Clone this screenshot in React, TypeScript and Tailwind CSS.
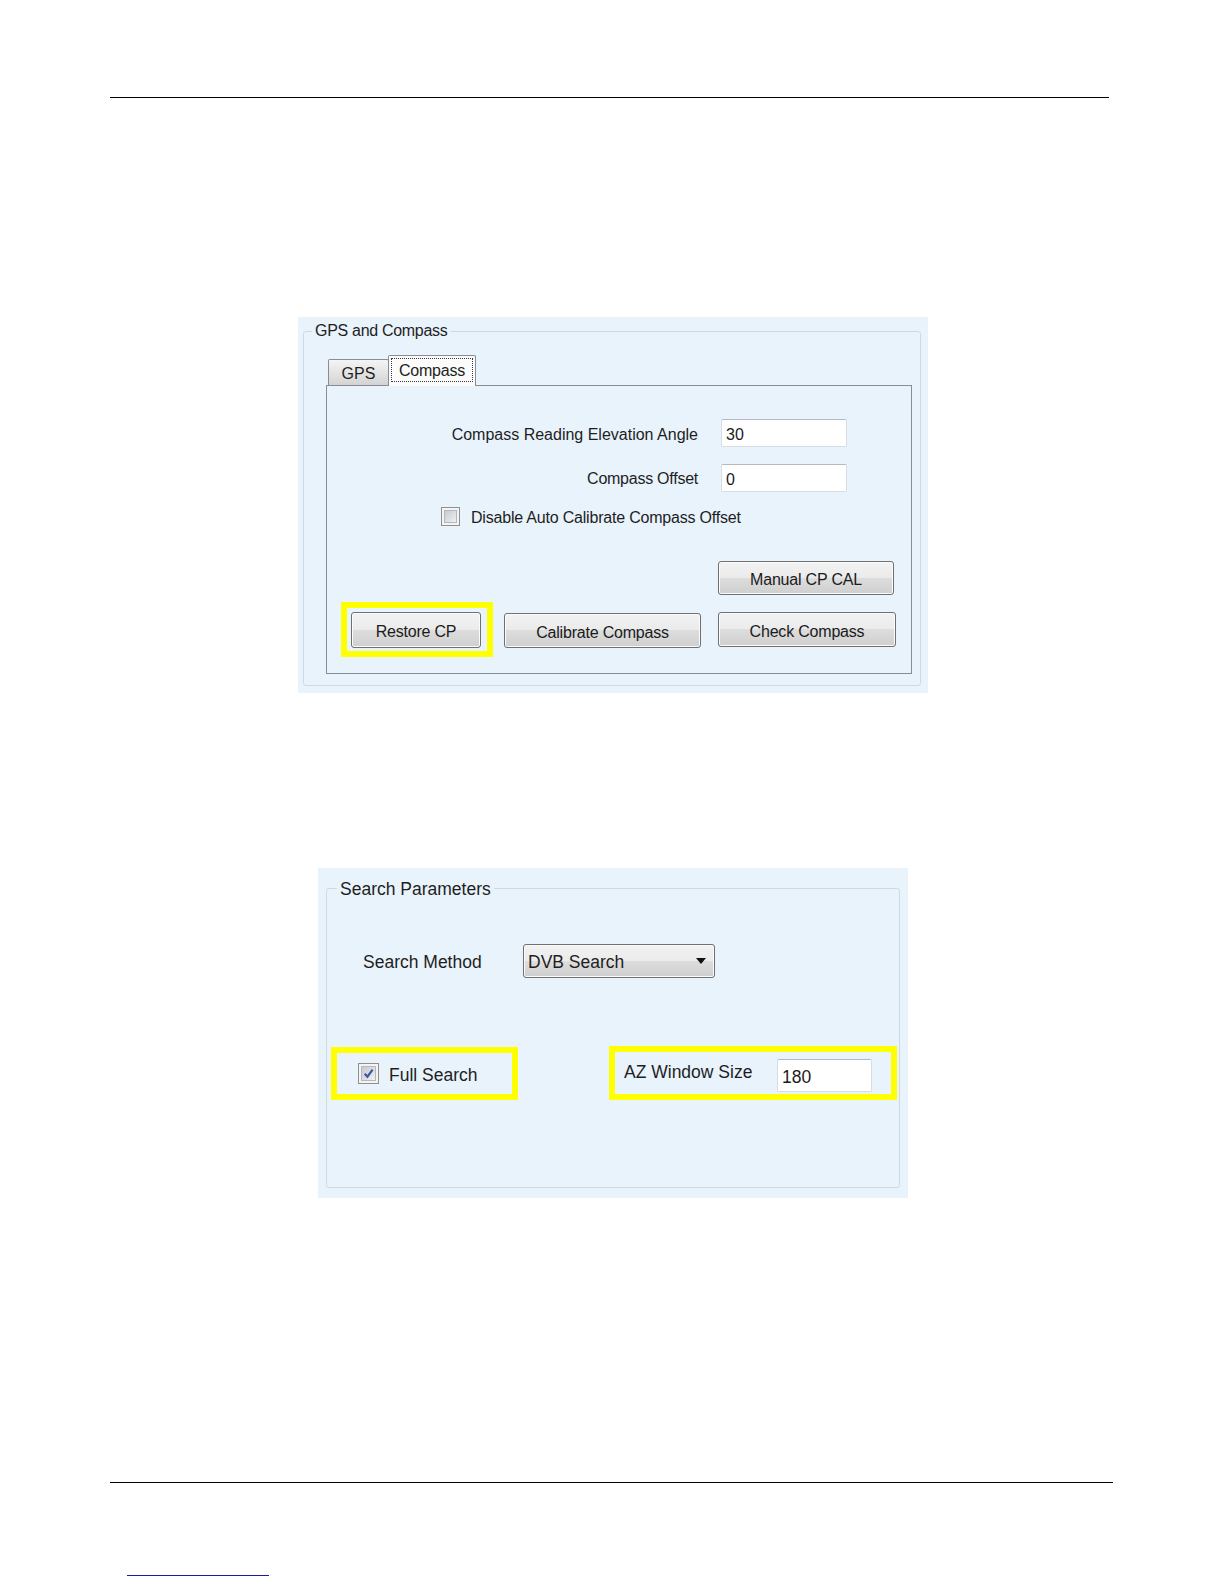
import { FC, ReactNode } from 'react';
import clsx from 'clsx';

type BoxProps = {
  className?: string;
  children?: ReactNode;
};

// classic win7 push button
const WinButton: FC<BoxProps> = ({ className, children }) => (
  <button
    type="button"
    className={clsx(
      'flex items-center justify-center rounded-[3px] border border-[#707070] bg-[linear-gradient(#f2f2f2_0%,#ebebeb_50%,#dddddd_50%,#cfcfcf_100%)] pt-[4px] text-[16px] tracking-[-0.2px] text-[#1b1b1b] shadow-[inset_0_0_0_1px_#fbfbfb]',
      className,
    )}
  >
    {children}
  </button>
);

const TextBox: FC<BoxProps> = ({ className, children }) => (
  <div
    className={clsx(
      'flex items-center rounded-[2px] border border-[#d7dde3] border-t-[#b5b9bf] bg-white pl-[4px] pt-[4px] text-[#1b1b1b]',
      className,
    )}
  >
    {children}
  </div>
);

const CheckBox: FC<{ checked?: boolean; className?: string }> = ({ checked, className }) => (
  <div className={clsx('border border-[#8f8f8f] bg-[#f4f4f4] p-[2px]', className)}>
    <div className="relative h-full w-full border border-[#b4b8be] bg-[linear-gradient(135deg,#c6cad0,#eef0f2)]">
      {checked && (
        <svg viewBox="0 0 12 12" className="absolute inset-0 h-full w-full">
          <path d="M2.5 6.2 L5 9 L9.8 2.4" fill="none" stroke="#3f57a6" strokeWidth="2" />
        </svg>
      )}
    </div>
  </div>
);

const Highlight: FC<BoxProps> = ({ className, children }) => (
  <div className={clsx('border-[6px] border-[#ffff00]', className)}>{children}</div>
);

const CompassShot: FC = () => (
  <div className="ml-[298px] mt-[219px] h-[376px] w-[630px] bg-[#e9f3fc] pl-[5px] pt-[14px] text-[16px] text-[#1e1e1e]">
    <div className="relative h-[355px] w-[618px] rounded-[3px] border border-[#cfd9e0]">
      <span className="absolute left-[8px] top-[-11px] bg-[#e9f3fc] px-[3px] leading-[20px] tracking-[-0.3px]">
        GPS and Compass
      </span>
      <div className="ml-[22px] pt-[23px]">
        {/* tab strip */}
        <div className="relative z-10 flex h-[31px] items-end pl-[2px]">
          <div className="mb-[1px] flex h-[26px] w-[61px] items-center justify-center rounded-t-[2px] border border-b-0 border-[#898c95] bg-[linear-gradient(#f4f4f4,#e4e4e4_50%,#d3d3d3)] pt-[3px]">
            GPS
          </div>
          <div className="-ml-px flex h-[31px] w-[88px] justify-center rounded-t-[2px] border border-b-0 border-[#898c95] bg-[#fbfbfb] pt-[2px]">
            <span className="h-[24px] border border-dotted border-[#3a3a3a] px-[7px] pt-[2px] leading-[20px] tracking-[-0.2px]">
              Compass
            </span>
          </div>
        </div>
        {/* tab page */}
        <div className="-mt-px flex h-[289px] w-[586px] flex-col border border-[#898c95] bg-[#e9f3fc]">
          <div className="mt-[32px] flex items-center justify-end gap-[23px] pr-[64px]">
            <span className="pt-[5px]">Compass Reading Elevation Angle</span>
            <TextBox className="h-[28px] w-[126px]">30</TextBox>
          </div>
          <div className="mt-[17px] flex items-center justify-end gap-[23px] pr-[64px]">
            <span className="pt-[2px] tracking-[-0.25px]">Compass Offset</span>
            <TextBox className="h-[28px] w-[126px]">0</TextBox>
          </div>
          <div className="mt-[15px] flex h-[18px] items-center gap-[11px] pl-[114px]">
            <CheckBox className="h-[19px] w-[19px]" />
            <span className="pt-[4px] tracking-[-0.2px]">Disable Auto Calibrate Compass Offset</span>
          </div>
          <div className="mt-[36px] flex items-start pl-[14px]">
            <Highlight className="mt-[41px] h-[55px] w-[152px] pl-[4px] pt-[4px]">
              <WinButton className="h-[36px] w-[130px]">Restore CP</WinButton>
            </Highlight>
            <WinButton className="ml-[11px] mt-[52px] h-[35px] w-[197px]">Calibrate Compass</WinButton>
            <div className="ml-[17px] flex flex-col gap-[17px]">
              <WinButton className="h-[34px] w-[176px]">Manual CP CAL</WinButton>
              <WinButton className="h-[35px] w-[178px]">Check Compass</WinButton>
            </div>
          </div>
        </div>
      </div>
    </div>
  </div>
);

const SearchShot: FC = () => (
  <div className="ml-[318px] mt-[175px] h-[330px] w-[590px] bg-[#e9f3fc] pl-[8px] pt-[20px] text-[17.5px] text-[#1e1e1e]">
    <div className="relative h-[300px] w-[574px] rounded-[3px] border border-[#cfd9e0]">
      <span className="absolute left-[10px] top-[-11px] bg-[#e9f3fc] px-[3px] leading-[22px]">Search Parameters</span>
      <div className="mt-[55px] flex items-center pl-[36px]">
        <span className="w-[160px] pt-[2px]">Search Method</span>
        <div className="flex h-[34px] w-[192px] items-center justify-between rounded-[3px] border border-[#707070] bg-[linear-gradient(#f2f2f2_0%,#ebebeb_50%,#dddddd_50%,#cfcfcf_100%)] pl-[4px] pr-[8px] shadow-[inset_0_0_0_1px_#fbfbfb]">
          <span className="pt-[2px]">DVB Search</span>
          <svg viewBox="0 0 10 6" className="h-[6px] w-[10px]">
            <path d="M0 0 H10 L5 6 Z" fill="#111" />
          </svg>
        </div>
      </div>
      <div className="mt-[68px] flex items-start pl-[4px]">
        <Highlight className="mt-px flex h-[53px] w-[187px] items-center gap-[10px] pl-[21px]">
          <CheckBox checked className="h-[21px] w-[21px]" />
          <span className="pt-[4px]">Full Search</span>
        </Highlight>
        <Highlight className="ml-[91px] flex h-[54px] w-[288px] items-start pl-[9px]">
          <span className="mt-[9px] w-[153px] leading-[22px]">AZ Window Size</span>
          <TextBox className="mt-[7px] h-[33px] w-[95px]">180</TextBox>
        </Highlight>
      </div>
    </div>
  </div>
);

const App: FC = () => {
  return (
    <div className="flex h-[1584px] w-[1224px] flex-col bg-white font-['Liberation_Sans',Arial,sans-serif]">
      <div className="ml-[110px] mt-[97px] h-px w-[999px] bg-black" />
      <CompassShot />
      <SearchShot />
      <div className="ml-[110px] mt-[284px] h-px w-[1003px] bg-black" />
      <div className="ml-[127px] mt-[92px] h-px w-[142px] bg-[#1c1c9c]" />
    </div>
  );
};

export default App;
